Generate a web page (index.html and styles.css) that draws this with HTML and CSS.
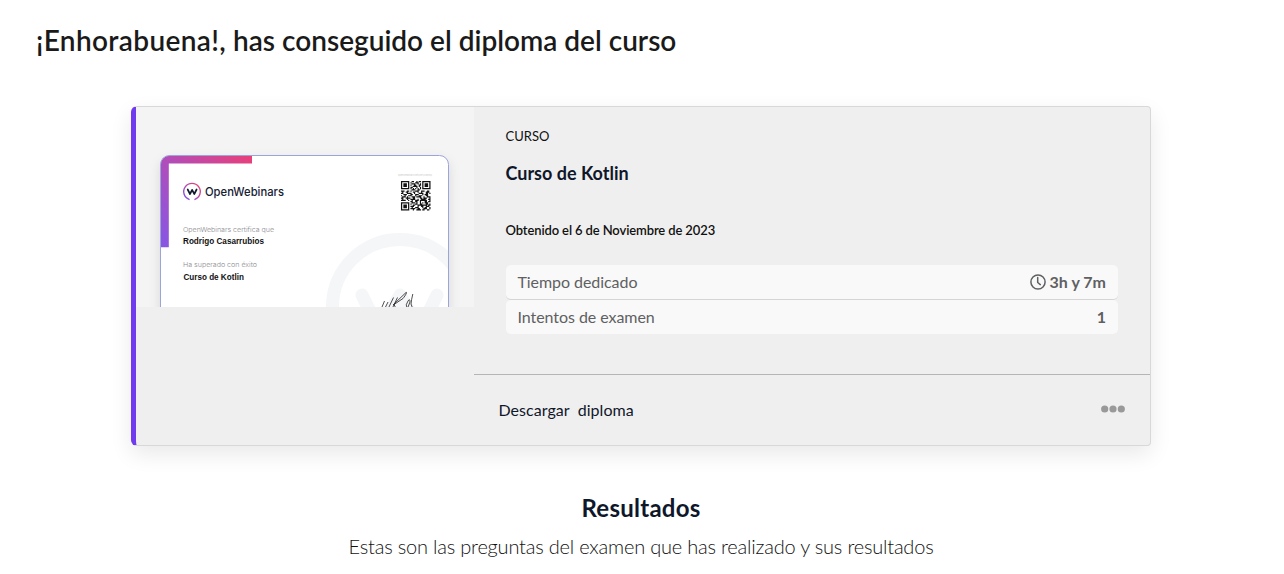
FILE: index.html
```html
<!DOCTYPE html>
<html lang="es">
<head>
<meta charset="utf-8">
<title>Diploma del curso</title>
<link rel="stylesheet" href="styles.css">
</head>
<body>
<h1 class="page-title"><span class="cheer">¡Enhorabuena!,</span> has conseguido el diploma del curso</h1>
<main class="content">
  <article class="card">
    <div class="preview">
      <svg class="diploma" viewBox="0 0 338 200" width="338" height="200">
        <defs>
          <linearGradient id="corner" gradientUnits="userSpaceOnUse" x1="24" y1="140" x2="116" y2="48">
            <stop offset="0" stop-color="#8657e6"/><stop offset=".5" stop-color="#b04dba"/><stop offset="1" stop-color="#ea3f78"/>
          </linearGradient>
          <linearGradient id="ring" x1="0" y1="1" x2="1" y2="0">
            <stop offset="0" stop-color="#7a50f0"/><stop offset="1" stop-color="#f0406e"/>
          </linearGradient>
          <clipPath id="sheet"><rect x="24.5" y="48.5" width="288" height="170" rx="9"/></clipPath>
        </defs>
        <rect class="sheet" x="24.5" y="48.5" width="288" height="170" rx="9"/>
        <g clip-path="url(#sheet)">
          <path d="M24 48H116V56.6H32.8V140.3H24Z" fill="url(#corner)"/>
          <g class="watermark">
            <circle cx="264" cy="200" r="67.5"/>
            <path d="M226 188L243 223L264 188L284 223L301 188"/>
          </g>
        </g>
        <rect class="sheet-border" x="24.5" y="48.5" width="288" height="170" rx="9"/>
        <path d="M53.6 92.6A8.3 8.3 0 1 1 58.4 92.6" fill="none" stroke="url(#ring)" stroke-width="1.4"/>
        <path d="M51.7 82.5L54 87L56.1 82.8L58.3 87L60.6 82.5" class="logo-w"/>
        <text class="brand" x="69" y="89" textLength="79" lengthAdjust="spacingAndGlyphs">OpenWebinars</text>
        <text class="label" x="47" y="125" textLength="91" lengthAdjust="spacingAndGlyphs">OpenWebinars certifica que</text>
        <text class="value" x="47" y="137" textLength="81" lengthAdjust="spacingAndGlyphs">Rodrigo Casarrubios</text>
        <text class="label" x="47" y="159.7" textLength="74" lengthAdjust="spacingAndGlyphs">Ha superado con éxito</text>
        <text class="value" x="47.4" y="172.6" textLength="60.5" lengthAdjust="spacingAndGlyphs">Curso de Kotlin</text>
        <text class="url" x="262" y="68.5" textLength="34">openwebinars.net/cert/X9FEQ</text>
        <g transform="translate(265 74) scale(1.18)">
          <path class="qr" d="M0 .5h7M0 6.5h7M.5 0v7M6.5 0v7M2 3.5h3M2 2.5h3M2 4.5h3M18 .5h7M18 6.5h7M18.500 0v7M24.500 0v7M20 3.5h3M20 2.5h3M20 4.5h3M0 18.500h7M0 24.500h7M.5 18v7M6.5 18v7M2 21.500h3M2 20.500h3M2 22.500h3"/>
          <path class="qr" d="M9 .5h2m2 0h1m1 0h2M8 1.500h1m3 0h3M9 2.500h3m2 0h1m1 0h1M8 3.500h1m2 0h2m2 0h2M10 4.500h4m1 0h1M8 5.500h2m3 0h1m2 0h1M8 6.500h1m1 0h1m1 0h1m1 0h1m1 0h1M9 7.500h3m2 0h2M0 8.500h3m2 0h2m1 0h1m3 0h3m2 0h3m2 0h2M1 9.500h1m2 0h2m4 0h2m2 0h1m2 0h1m3 0h3M0 10.500h2m3 0h4m2 0h1m3 0h4m2 0h2m1 0h1M2 11.500h3m3 0h2m2 0h3m3 0h1m1 0h3M0 12.500h1m2 0h1m2 0h3m3 0h1m2 0h3m3 0h2M1 13.500h3m1 0h1m3 0h3m1 0h4m2 0h1m2 0h3M0 14.500h2m2 0h4m2 0h2m4 0h2m1 0h3m2 0h1M1 15.500h1m3 0h1m2 0h4m2 0h1m2 0h4m2 0h2M0 16.500h4m2 0h1m2 0h1m2 0h3m1 0h6m2 0h1M8 17.500h2m2 0h2m2 0h1m3 0h2m1 0h2M9 18.500h3m1 0h1m2 0h1m1 0h1m1 0h3M8 19.500h1m3 0h2m2 0h2m3 0h2m1 0h1M10 20.500h2m2 0h8m1 0h2M8 21.500h3m3 0h1m2 0h2m2 0h3M9 22.500h1m2 0h3m3 0h1m1 0h2m2 0h1M8 23.500h4m2 0h2m3 0h3m2 0h1M10 24.500h1m2 0h4m1 0h2m2 0h2"/>
        </g>
        <path class="signature" d="M246 200l2.500-6M248.500 202l3.500-7M252 202l5.500-11.500M256 202l5.500-11.500M257 198l13-12.500c1.500-1-.5 3-3 6l-9 6l2 4M271 201q-2-3 1-7q2-3 2 1l-2 5M276.800 187q-1.500 6-1.800 10l1.500 4"/>
      </svg>
    </div>
    <div class="details">
      <div class="summary">
        <div class="kind">CURSO</div>
        <h2 class="course">Curso de Kotlin</h2>
        <div class="date">Obtenido el 6 de Noviembre de 2023</div>
        <dl class="stats">
          <div class="stat"><dt>Tiempo dedicado</dt><dd><svg class="clock" viewBox="0 0 16 16" width="16" height="16"><circle cx="8" cy="8" r="7.100"/><path d="M7.700 3.500V8.500L10.300 10.600"/></svg><span>3h y 7m</span></dd></div>
          <div class="stat"><dt>Intentos de examen</dt><dd><span>1</span></dd></div>
        </dl>
      </div>
      <footer class="actions">
        <a class="download">Descargar&nbsp; diploma</a>
        <svg class="more" viewBox="0 0 24 8" width="24" height="8"><circle cx="3.700" cy="4" r="3.600"/><circle cx="12" cy="4" r="3.600"/><circle cx="20.300" cy="4" r="3.600"/></svg>
      </footer>
    </div>
  </article>
  <section class="results">
    <h2 class="results-title">Resultados</h2>
    <p class="results-text">Estas son las preguntas del examen que has realizado y sus resultados</p>
  </section>
</main>
</body>
</html>
```
FILE: styles.css
```css
* { box-sizing: border-box; }
body { margin: 0; background: #fff; color: #0f172a; font-family: Lato, "Open Sans", sans-serif; height: 574px; overflow: hidden; }
h1, h2, p, dl, dd { margin: 0; }
.page-title { height: 106px; padding: 20px 36px 0; font-size: 28px; line-height: 40px; font-weight: 600; color: #1a1a1a; white-space: nowrap; }
.cheer { letter-spacing: .36px; }
.content { width: 1020px; margin-left: 131px; }
.card { display: flex; height: 340px; background: #efefef; border: 1px solid #d8d8d8; border-left: 5px solid #703aee; border-radius: 6px 4px 4px 6px; box-shadow: 0 8px 22px rgba(0, 0, 0, .09); }
.preview { width: 338px; height: 200px; background: #f4f4f4; overflow: hidden; }
.diploma { display: block; }
.sheet { fill: #fff; filter: drop-shadow(0 5px 6px rgba(0, 0, 0, .12)); }
.sheet-border { fill: none; stroke: #9da4dc; stroke-width: 1; }
.watermark { fill: none; stroke: #f5f6f8; stroke-width: 13; stroke-linecap: round; stroke-linejoin: round; }
.logo-w { fill: none; stroke: #111a2e; stroke-width: 1.7; stroke-linecap: round; stroke-linejoin: round; }
.brand { font: 500 12px Inter, sans-serif; fill: #172033; }
.label { font: 300 6.800px Inter, sans-serif; fill: #8b8b90; }
.value { font: bold 8.200px "Liberation Sans", sans-serif; fill: #111; }
.url { font: 2.600px Inter, sans-serif; fill: #ccc; }
.qr { fill: none; stroke: #111; stroke-width: 1.050; }
.signature { fill: none; stroke: #222; stroke-width: .8; }
.details { flex: 1; display: flex; flex-direction: column; }
.summary { flex: 1; padding: 19px 32px 0 31.500px; }
.kind { font-size: 13px; line-height: 20px; color: #111; }
.course { margin-top: 14px; font-size: 18px; line-height: 26px; font-weight: 700; }
.date { margin-top: 34px; font-size: 13px; line-height: 20px; font-weight: 600; letter-spacing: -.12px; color: #111; }
.stats { margin-top: 25px; font-size: 16px; color: #5f6062; }
.stat { display: flex; align-items: center; justify-content: space-between; height: 34px; padding: 0 12px 1px; background: #f9f9f9; border-radius: 5px; }
.stat:first-child { height: 35px; border-bottom: 1px solid #d5d5d5; }
.stat dt { letter-spacing: -.06px; padding-bottom: 1px; }
.stat dd { display: flex; align-items: center; gap: 4px; font-weight: 700; }
.stat dd span { padding-bottom: 1px; }
.clock { fill: none; stroke: #5f6062; stroke-width: 1.500; stroke-linecap: round; }
.actions { display: flex; align-items: center; justify-content: space-between; height: 71px; padding: 0 25px 0 24.500px; border-top: 1px solid #b5b5b5; }
.download { font-size: 16px; padding-bottom: 2px; letter-spacing: .05px; }
.more { fill: #999; margin-top: -3px; }
.results { padding-top: 46px; text-align: center; }
.results-title { font-size: 24px; line-height: 32px; font-weight: 700; letter-spacing: .25px; }
.results-text { margin-top: 7px; font-size: 20px; line-height: 30px; font-weight: 300; letter-spacing: -.2px; color: #111; }
```
